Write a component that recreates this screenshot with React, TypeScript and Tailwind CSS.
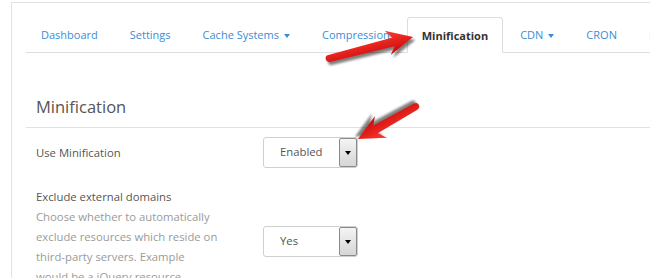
import React from "react";

const font = { fontFamily: '"Open Sans", "Noto Sans", Arial, sans-serif' };

function Caret() {
  return <span className="inline-block ml-[5px] align-middle border-x-[3.5px] border-x-transparent border-t-[4px] border-t-[#3a8dd6]" />;
}

function Select({ value }: { value: string }) {
  return (
    <div className="flex w-[95px] h-[31px] bg-white border border-[#cfcfcf] rounded-[3px]">
      <div className="flex-1 flex items-center pl-[16px] text-[11.3px] text-[#555]">{value}</div>
      <div className="w-[18px] h-full flex items-center justify-center border border-[#8a8a8a] rounded-[2px] bg-gradient-to-b from-[#f4f4f4] to-[#d6d6d6]">
        <span className="border-x-[3.5px] border-x-transparent border-t-[4px] border-t-black" />
      </div>
    </div>
  );
}

function Arrow({ x1, y1, x2, y2, id }: { x1: number; y1: number; x2: number; y2: number; id: string }) {
  const L = Math.hypot(x2 - x1, y2 - y1);
  const a = (Math.atan2(y2 - y1, x2 - x1) * 180) / Math.PI;
  const d = `M0,-3 L${L - 20},-4.5 L${L - 26},-13 L${L},0 L${L - 26},12 L${L - 20},4.5 L0,4 A3.5,3.5 0 0 1 0,-3 Z`;
  return (
    <g transform={`translate(${x1},${y1}) rotate(${a})`}>
      <path d={d} fill="#000" opacity="0.5" transform="translate(1.5,3.5)" filter="url(#blur)" />
      <path d={d} fill={`url(#${id})`} />
    </g>
  );
}

export default function App() {
  const tabs = ["Dashboard", "Settings", "Cache Systems", "Compression"];
  const after = ["CDN", "CRON", "Database"];
  return (
    <div className="relative w-[650px] h-[278px] overflow-hidden bg-white" style={font}>
      <div className="ml-[11px] mt-[2px] h-full border-l border-t border-[#e2e2e2] pl-[14px] pt-[14px]">
        <div className="flex items-end h-[36px] border-b border-[#dddddd] whitespace-nowrap">
          {tabs.map((t) => (
            <div key={t} className="px-[15px] mr-[2px] h-[35px] pt-[2px] flex items-center text-[11px] text-[#3a8dd6]">
              {t}
              {t === "Cache Systems" && <Caret />}
            </div>
          ))}
          <div className="px-[14px] mr-[2px] h-[36px] -mb-px pt-[2px] flex items-center text-[11px] font-bold text-[#333] bg-white border border-[#dddddd] border-b-white rounded-t-[3px]">
            Minification
          </div>
          {after.map((t) => (
            <div key={t} className="px-[15px] mr-[2px] h-[35px] pt-[2px] flex items-center text-[11px] text-[#3a8dd6]">
              {t}
              {t === "CDN" && <Caret />}
            </div>
          ))}
        </div>

        <div className="pt-[42px] pb-[9px] pl-[10px] border-b border-[#e2e2e2] text-[16.5px] leading-[23px] text-[#555]">Minification</div>

        <div className="flex items-center pl-[10px] pt-[9px]">
          <div className="w-[227px] pt-[1px] text-[11.3px] text-[#555]">Use Minification</div>
          <Select value="Enabled" />
        </div>

        <div className="flex pl-[10px] pt-[19px]">
          <div className="w-[227px] text-[11.3px] leading-[20px]">
            <div className="text-[#555]">Exclude external domains</div>
            <div className="text-[#9a9a9a]">
              Choose whether to automatically
              <br />
              exclude resources which reside on
              <br />
              third-party servers. Example
              <br />
              would be a jQuery resource
              <br />
              hosted on a CDN.
            </div>
          </div>
          <div className="pt-[39px]">
            <Select value="Yes" />
          </div>
        </div>
      </div>

      <svg className="absolute inset-0 pointer-events-none" width="650" height="278">
        <defs>
          <filter id="blur" x="-20%" y="-50%" width="140%" height="200%">
            <feGaussianBlur stdDeviation="1.3" />
          </filter>
          <linearGradient id="g1" x1="0" y1="0" x2="0" y2="1">
            <stop offset="0" stopColor="#ff3a30" />
            <stop offset="1" stopColor="#c80808" />
          </linearGradient>
          <linearGradient id="g2" x1="0" y1="0" x2="0" y2="1">
            <stop offset="0" stopColor="#ff3a30" />
            <stop offset="1" stopColor="#c80808" />
          </linearGradient>
        </defs>
        <Arrow id="g1" x1={329} y1={58} x2={413} y2={37} />
        <Arrow id="g2" x1={416} y1={107} x2={358} y2={139} />
      </svg>
    </div>
  );
}
